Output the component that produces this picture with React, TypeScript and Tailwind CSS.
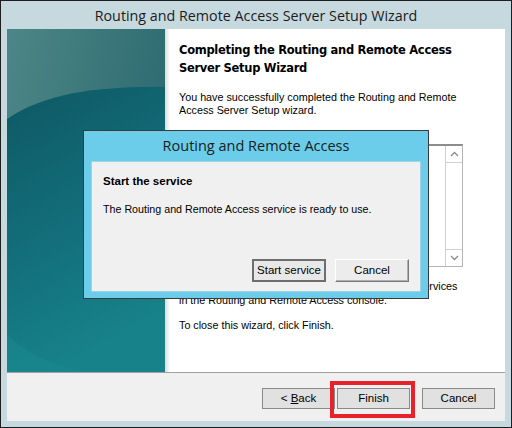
const sans = "font-['Liberation_Sans',Arial,sans-serif]";

const TealArt = () => (
  <svg width="158" height="343" viewBox="0 0 158 343" className="block">
    <defs>
      <linearGradient id="topg" x1="0" y1="0" x2="1" y2="0.4">
        <stop offset="0" stopColor="#4d8686" />
        <stop offset="1" stopColor="#2c6a70" />
      </linearGradient>
      <linearGradient id="botg" x1="0" y1="0" x2="0.3" y2="1">
        <stop offset="0" stopColor="#0e5864" />
        <stop offset="0.55" stopColor="#126e7a" />
        <stop offset="1" stopColor="#178289" />
      </linearGradient>
    </defs>
    <rect width="158" height="343" fill="url(#topg)" />
    <path d="M0 90 C 40 62, 100 57, 158 58 L158 343 L0 343 Z" fill="url(#botg)" />
    <path d="M0 305 C 20 325, 50 338, 80 343 L0 343 Z" fill="#1a8a90" opacity="0.5" />
  </svg>
);

const WinButton = ({ children }: { children: React.ReactNode }) => (
  <div className="flex h-[21px] w-[73px] items-center justify-center border border-[#8a8a8a] bg-[#e1e1e1] text-[11.5px] text-black">
    {children}
  </div>
);

export default function App() {
  return (
    <div className={`relative flex h-[428px] w-[512px] flex-col border border-[#1e1e1e] bg-[#c6d9df] ${sans}`}>
      <div className="flex h-[28px] items-center justify-center pt-px font-['Open_Sans',sans-serif] text-[14.3px] text-[#1c1c1c]">
        Routing and Remote Access Server Setup Wizard
      </div>
      <div className="mx-[6px] mb-[6px] flex flex-1 flex-col">
        <div className="flex h-[343px]">
          <TealArt />
          <div className="w-[5px] bg-gradient-to-r from-[#dcdcdc] to-white" />
          <div className="flex-1 bg-white pl-[9px] pr-[42px] pt-[12px] text-[10.75px] text-black">
            <div className="font-['DejaVu_Sans',Verdana,sans-serif] text-[11.5px] font-bold leading-[18px] tracking-[-0.3px]">
              Completing the Routing and Remote Access
              <br />
              Server Setup Wizard
            </div>
            <p className="mt-[14px] whitespace-nowrap leading-[13px]">
              You have successfully completed the Routing and Remote
              <br />
              Access Server Setup wizard.
            </p>
            <div className="mt-[27px] flex h-[123px] border border-[#b4b4b4] border-t-2 border-t-[#8c8c8c] bg-white">
              <div className="flex-1" />
              <div className="flex w-[17px] flex-col border-l border-[#d0d0d0]">
                <div className="flex h-[17px] items-center justify-center border-b border-[#d0d0d0]">
                  <svg width="9" height="6" viewBox="0 0 9 6">
                    <path d="M1 5 L4.5 1.5 L8 5" fill="none" stroke="#8a8a8a" strokeWidth="1.3" />
                  </svg>
                </div>
                <div className="flex-1" />
                <div className="flex h-[17px] items-center justify-center border-t border-[#d0d0d0]">
                  <svg width="9" height="6" viewBox="0 0 9 6">
                    <path d="M1 1 L4.5 4.5 L8 1" fill="none" stroke="#8a8a8a" strokeWidth="1.3" />
                  </svg>
                </div>
              </div>
            </div>
            <p className="mt-[12px] whitespace-nowrap leading-[14px]">
              After you close this wizard, configure the selected services
              <br />
              in the Routing and Remote Access console.
            </p>
            <p className="mt-[11px] leading-[14px]">To close this wizard, click Finish.</p>
          </div>
        </div>
        <div className="h-px bg-[#a0a0a0]" />
        <div className="flex flex-1 items-start justify-end bg-[#f0f0f0] pr-[10px] pt-[15px]">
          <WinButton>
            <span>
              &lt; <span className="underline">B</span>ack
            </span>
          </WinButton>
          <div className="ml-[2px]">
            <WinButton>Finish</WinButton>
          </div>
          <div className="ml-[12px]">
            <WinButton>Cancel</WinButton>
          </div>
        </div>
      </div>

      {/* red highlight around Finish */}
      <div className="absolute left-[329px] top-[380px] h-[37px] w-[85px] border-[4px] border-[#e8212a]" />

      <div className="absolute left-[82px] top-[129px] flex h-[169px] w-[346px] flex-col border border-[#3a3a3a] bg-[#6bcde9]">
        <div className="flex h-[30px] items-center justify-center font-['Open_Sans',sans-serif] text-[14.5px] text-[#1c1c1c]">
          Routing and Remote Access
        </div>
        <div className="mx-[7px] mb-[6px] flex flex-1 flex-col border border-[#9fd3e4] bg-[#f0f0f0] px-[11px] pt-[12px] text-[10.7px] text-black">
          <div className="text-[11.5px] font-bold leading-[14px]">Start the service</div>
          <div className="mt-[14px] leading-[14px]">
            The Routing and Remote Access service is ready to use.
          </div>
          <div className="mt-auto mb-[9px] flex justify-end gap-[9px] text-[11.5px]">
            <div className="flex h-[23px] w-[74px] items-center justify-center border-2 border-[#6e6e6e] bg-[#e8e8e8]">
              Start service
            </div>
            <div className="flex h-[23px] w-[74px] items-center justify-center border border-t-white border-l-white border-r-[#7a7a7a] border-b-[#7a7a7a] bg-[#ececec] shadow-[inset_-1px_-1px_0_#b0b0b0]">
              Cancel
            </div>
          </div>
        </div>
      </div>
    </div>
  );
}
